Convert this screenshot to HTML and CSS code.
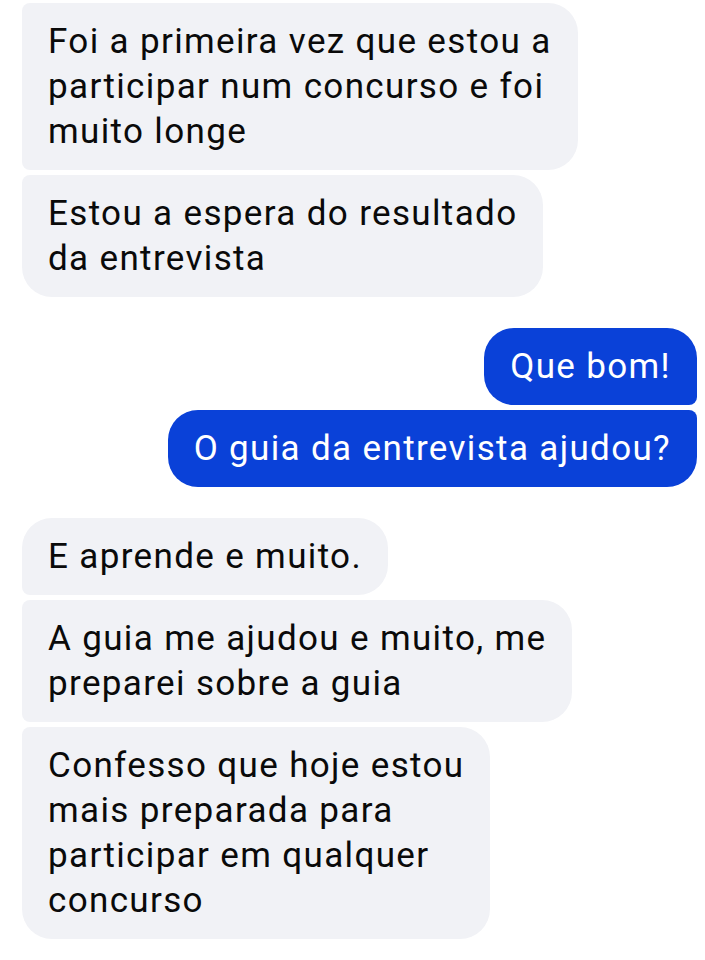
FILE: index.html
```html
<!DOCTYPE html>
<html lang="pt">
<head>
<meta charset="utf-8">
<link rel="stylesheet" href="styles.css">
</head>
<body>
<div class="chat">
  <div class="group in">
    <div class="msg first">Foi a primeira vez que estou a<br>participar num concurso e foi<br>muito longe</div>
    <div class="msg last">Estou a espera do resultado<br>da entrevista</div>
  </div>
  <div class="group out">
    <div class="msg first">Que bom!</div>
    <div class="msg last">O guia da entrevista ajudou?</div>
  </div>
  <div class="group in">
    <div class="msg first">E aprende e muito.</div>
    <div class="msg mid">A guia me ajudou e muito, me<br>preparei sobre a guia</div>
    <div class="msg last">Confesso que hoje estou<br>mais preparada para<br>participar em qualquer<br>concurso</div>
  </div>
</div>
</body>
</html>
```
FILE: styles.css
```css
html, body {
  margin: 0;
  padding: 0;
  background: #ffffff;
}
.chat {
  display: flex;
  flex-direction: column;
  gap: 31px;
  padding: 3px 8px 0 22px;
  font-family: Roboto, "Noto Sans", sans-serif;
  font-size: 35px;
  line-height: 45px;
  letter-spacing: 1.35px;
}
.group {
  display: flex;
  flex-direction: column;
  gap: 5px;
}
.group.in { align-items: flex-start; }
.group.out { align-items: flex-end; }
.msg {
  padding: 16px 26px 16px 26px;
  white-space: nowrap;
}
.in .msg {
  background: #f1f2f6;
  color: #0a0a0a;
  border-radius: 8px 30px 30px 8px;
}
.in .msg.first { border-top-left-radius: 30px; }
.in .msg.last { border-bottom-left-radius: 30px; }
.chat > .group.in:first-child .msg.first { border-top-left-radius: 8px; }
.out .msg {
  background: #0a41d8;
  color: #ffffff;
  border-radius: 30px 8px 8px 30px;
}
.out .msg.first { border-top-right-radius: 30px; }
.out .msg.last { border-bottom-right-radius: 30px; }
```
